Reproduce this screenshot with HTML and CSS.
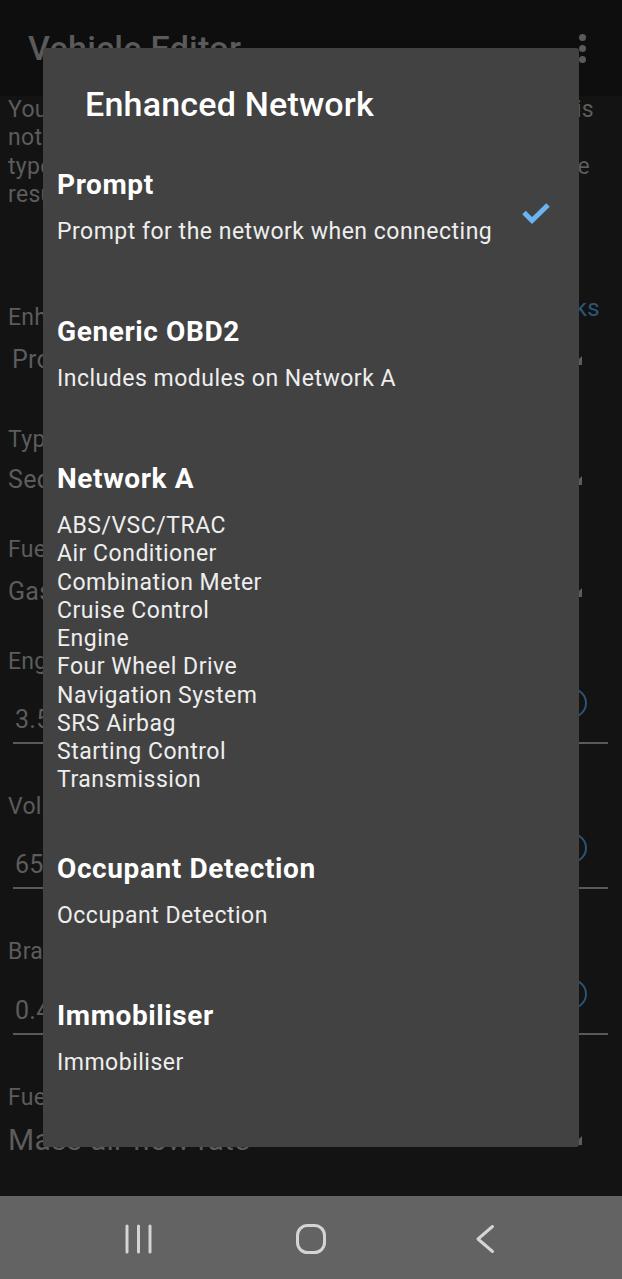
FILE: index.html
```html
<!DOCTYPE html>
<html lang="en">
<head>
<meta charset="utf-8">
<title>Vehicle Editor</title>
<link rel="stylesheet" href="styles.css">
</head>
<body>
<div class="screen">
  <header class="appbar">
    <span class="appbar-title">Vehicle Editor</span>
    <span class="overflow"><i></i><i></i><i></i></span>
  </header>

  <main class="editor">
    <div class="intro">
      <div class="intro-line"><span>You can create a custom vehicle if your</span><span>vehicle is</span></div>
      <div class="intro-line"><span>not listed. Choose the settings that match the</span></div>
      <div class="intro-line"><span>type, fuel and engine of your vehicle to get</span><span class="tail">the</span></div>
      <div class="intro-line"><span>results you expect from the app.</span></div>
    </div>

    <div class="field-label label-first"><span>Enhanced Network</span><span class="link">Networks</span></div>
    <div class="spinner spinner-inset"><span>Prompt</span><i class="arrow"></i></div>

    <div class="field-label label-after-first"><span>Type</span></div>
    <div class="spinner spinner-tight"><span>Sedan</span><i class="arrow"></i></div>

    <div class="field-label label-after-spinner"><span>Fuel Type</span></div>
    <div class="spinner"><span>Gasoline</span><i class="arrow"></i></div>

    <div class="field-label label-after-spinner"><span>Engine Displacement (L)</span></div>
    <div class="edit"><span>3.5</span><i class="help"></i></div>

    <div class="field-label label-after-edit"><span>Volumetric Efficiency (%)</span></div>
    <div class="edit"><span>65</span><i class="help"></i></div>

    <div class="field-label label-after-edit"><span>Brake Specific Fuel Consumption</span></div>
    <div class="edit edit-low"><span>0.4</span><i class="help"></i></div>

    <div class="field-label label-after-edit"><span>Fuel Rate Calculation</span></div>
    <div class="spinner spinner-last"><span>Mass air flow rate</span><i class="arrow"></i></div>
  </main>

  <nav class="navbar">
    <svg class="nav-icon" viewBox="0 0 30 30" aria-label="Recent apps">
      <line x1="4" y1="2" x2="4" y2="28"/><line x1="15.5" y1="2" x2="15.5" y2="28"/><line x1="27" y1="2" x2="27" y2="28"/>
    </svg>
    <svg class="nav-icon" viewBox="0 0 30 30" aria-label="Home">
      <rect x="1.5" y="1.5" width="27" height="27" rx="10" ry="10"/>
    </svg>
    <svg class="nav-icon" viewBox="0 0 30 30" aria-label="Back">
      <polyline points="22.5,2.5 8,15 22.5,27.5"/>
    </svg>
  </nav>

  <div class="dialog" role="dialog">
    <h2 class="dialog-title">Enhanced Network</h2>
    <div class="option">
      <div class="option-text">
        <div class="option-title">Prompt</div>
        <div class="option-summary">Prompt for the network when connecting</div>
      </div>
      <svg class="check" viewBox="0 0 28 22"><polyline points="2,10.5 10,18.5 26,3"/></svg>
    </div>
    <div class="option">
      <div class="option-text">
        <div class="option-title">Generic OBD2</div>
        <div class="option-summary">Includes modules on Network A</div>
      </div>
    </div>
    <div class="option">
      <div class="option-text">
        <div class="option-title">Network A</div>
        <div class="option-summary">ABS/VSC/TRAC<br>Air Conditioner<br>Combination Meter<br>Cruise Control<br>Engine<br>Four Wheel Drive<br>Navigation System<br>SRS Airbag<br>Starting Control<br>Transmission</div>
      </div>
    </div>
    <div class="option">
      <div class="option-text">
        <div class="option-title">Occupant Detection</div>
        <div class="option-summary">Occupant Detection</div>
      </div>
    </div>
    <div class="option">
      <div class="option-text">
        <div class="option-title">Immobiliser</div>
        <div class="option-summary">Immobiliser</div>
      </div>
    </div>
  </div>
</div>
</body>
</html>
```

FILE: styles.css
```css
* { box-sizing: border-box; }

html, body {
  margin: 0;
  padding: 0;
  background: #131313;
}

body {
  font-family: Roboto, "Noto Sans", "Liberation Sans", sans-serif;
}

.screen {
  position: relative;
  width: 622px;
  height: 1279px;
  display: flex;
  flex-direction: column;
  overflow: hidden;
}

/* ---------- dimmed app behind the dialog ---------- */
.appbar {
  flex: 0 0 96px;
  background: #0e0e0e;
  display: flex;
  align-items: center;
}

.appbar-title {
  margin-left: 28px;
  font-size: 34px;
  font-weight: 500;
  letter-spacing: 0.3px;
  line-height: 40px;
  color: #5a5a5a;
}

.overflow {
  margin-left: auto;
  margin-right: 36px;
  display: flex;
  flex-direction: column;
  gap: 4px;
}

.overflow i {
  display: block;
  width: 7px;
  height: 7px;
  border-radius: 50%;
  background: #5a5a5a;
}

.editor {
  flex: 1 1 auto;
  background: #131313;
  padding-left: 8px;
  color: #5c5c5c;
  font-size: 23px;
  letter-spacing: 0.3px;
  line-height: 30px;
  overflow: hidden;
}

.intro {
  font-size: 23px;
  line-height: 28.3px;
  padding-right: 28px;
}

.intro-line {
  display: flex;
  justify-content: space-between;
  white-space: nowrap;
}

.intro-line .tail { margin-right: 4px; }

.field-label {
  display: flex;
  align-items: center;
  justify-content: space-between;
  white-space: nowrap;
}

.label-first { margin-top: 94px; }
.label-after-first { margin-top: 50px; }
.label-after-spinner { margin-top: 40px; }
.label-after-edit { margin-top: 48px; }

.link {
  margin-right: 22px;
  margin-top: -20px;
  font-size: 24px;
  color: #2c5676;
}

.spinner {
  display: flex;
  align-items: flex-end;
  margin-top: 12px;
  font-size: 25px;
  white-space: nowrap;
}

.spinner-inset span { padding-left: 4px; }
.spinner-tight { margin-top: 10px; }
.spinner-last { margin-top: 12px; font-size: 30px; letter-spacing: 0.2px; }

.arrow {
  display: block;
  margin-left: auto;
  margin-right: 40px;
  margin-bottom: 10px;
  width: 0;
  height: 0;
  border-left: 9px solid transparent;
  border-bottom: 9px solid #5c5c5c;
}

.edit {
  display: flex;
  align-items: flex-start;
  margin: 28px 14px 0 5px;
  padding: 0 0 7px 2px;
  font-size: 25px;
  border-bottom: 2px solid #595959;
}

.edit-low { margin-top: 29px; }

.help {
  display: block;
  margin-left: auto;
  margin-right: 21px;
  margin-top: -17px;
  width: 30px;
  height: 30px;
  border: 2.5px solid #2c5474;
  border-radius: 50%;
}

/* ---------- system navigation bar ---------- */
.navbar {
  flex: 0 0 83px;
  background: #636363;
  display: flex;
  justify-content: center;
  align-items: center;
  gap: 143.5px;
  padding-top: 3px;
}

.nav-icon {
  width: 30px;
  height: 30px;
  fill: none;
  stroke: #d4d4d4;
  stroke-width: 3;
  stroke-linecap: round;
  stroke-linejoin: round;
}

/* ---------- dialog ---------- */
.dialog {
  position: absolute;
  left: 43px;
  top: 48px;
  width: 536px;
  height: 1099px;
  background: #424242;
  border-radius: 3px;
  color: #ffffff;
}

.dialog-title {
  margin: 0 0 16px;
  padding: 36px 0 0 42px;
  font-size: 34px;
  font-weight: 500;
  letter-spacing: 0.2px;
  line-height: 40px;
}

.option {
  display: flex;
  min-height: 147px;
  padding: 28px 29px 29px 14px;
}

.option-text {
  flex: 1 1 auto;
  align-self: flex-start;
}

.option-title {
  font-size: 28px;
  font-weight: 700;
  letter-spacing: 0.6px;
  line-height: 34px;
}

.option-summary {
  margin-top: 16px;
  font-size: 23px;
  letter-spacing: 0.5px;
  line-height: 28.25px;
  color: #eeeeee;
}

.check {
  align-self: center;
  width: 28px;
  height: 22px;
  fill: none;
  stroke: #6ab4f2;
  stroke-width: 5;
}
```
